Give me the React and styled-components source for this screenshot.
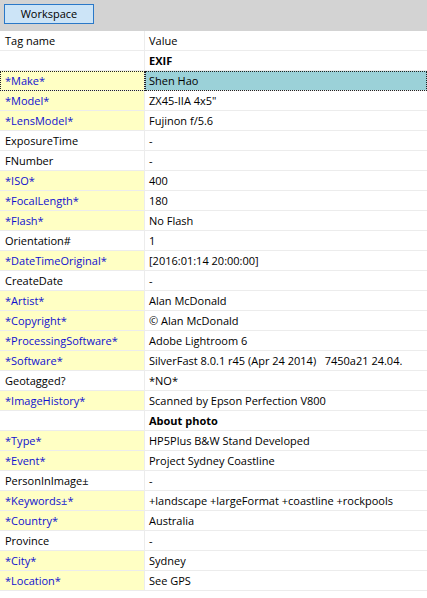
import React from "react";
import styled, { createGlobalStyle } from "styled-components";

const GlobalStyle = createGlobalStyle`
    html, body {
        margin: 0;
        padding: 0;
        background: #fff;
    }
    body {
        font-family: "Open Sans", "Noto Sans", "DejaVu Sans", sans-serif;
        font-size: 11px;
        color: #000;
    }
`;

const Window = styled.div`
    width: 427px;
    height: 598px;
    overflow: hidden;
    background: #fff;
`;

const Toolbar = styled.div`
    display: flex;
    align-items: flex-start;
    height: 31px;
    padding: 4px 0 0 4px;
    box-sizing: border-box;
    background: #d3d3d3;
`;

const ToolButton = styled.button`
    width: 90px;
    height: 20px;
    padding: 0;
    border: 1px solid #2a78c8;
    background: #cce4f7;
    font-family: inherit;
    font-size: 11px;
    color: #000;
    line-height: 16px;
`;

const Grid = styled.div`
    display: grid;
    grid-template-columns: 145px 1fr;
`;

const Cell = styled.div`
    height: 20px;
    box-sizing: border-box;
    border-bottom: 1px solid #ececec;
    padding-left: 5px;
    line-height: 20px;
    white-space: pre;
    overflow: hidden;
    background: ${({ $bg }) => $bg || "#fff"};
    color: ${({ $blue }) => ($blue ? "#1010d0" : "#000")};
    font-weight: ${({ $bold }) => ($bold ? 700 : 400)};
    outline: ${({ $focus }) => ($focus ? "1px dotted #222" : "none")};
    outline-offset: -1px;
`;

const NameCell = styled(Cell)`
    border-right: 1px solid #ececec;
`;

const ValueCell = styled(Cell)`
    padding-left: 4px;
`;

const rows = [
    ["EXIF", "", "section"],
    ["*Make*", "Shen Hao", "selected"],
    ["*Model*", "ZX45-IIA 4x5\""],
    ["*LensModel*", "Fujinon f/5.6"],
    ["ExposureTime", "-"],
    ["FNumber", "-"],
    ["*ISO*", "400"],
    ["*FocalLength*", "180"],
    ["*Flash*", "No Flash"],
    ["Orientation#", "1"],
    ["*DateTimeOriginal*", "[2016:01:14 20:00:00]"],
    ["CreateDate", "-"],
    ["*Artist*", "Alan McDonald"],
    ["*Copyright*", "© Alan McDonald"],
    ["*ProcessingSoftware*", "Adobe Lightroom 6"],
    ["*Software*", "SilverFast 8.0.1 r45 (Apr 24 2014)   7450a21 24.04."],
    ["Geotagged?", "*NO*"],
    ["*ImageHistory*", "Scanned by Epson Perfection V800"],
    ["About photo", "", "section"],
    ["*Type*", "HP5Plus B&W Stand Developed"],
    ["*Event*", "Project Sydney Coastline"],
    ["PersonInImage±", "-"],
    ["*Keywords±*", "+landscape +largeFormat +coastline +rockpools"],
    ["*Country*", "Australia"],
    ["Province", "-"],
    ["*City*", "Sydney"],
    ["*Location*", "See GPS"],
];

const App = () => {
    return (
        <Window>
            <GlobalStyle />
            <Toolbar>
                <ToolButton>Workspace</ToolButton>
            </Toolbar>
            <Grid>
                <NameCell>Tag name</NameCell>
                <ValueCell>Value</ValueCell>
                {rows.map(([name, value, kind]) => {
                    if (kind === "section") {
                        return (
                            <React.Fragment key={name}>
                                <NameCell />
                                <ValueCell $bold>{name}</ValueCell>
                            </React.Fragment>
                        );
                    }
                    const starred = name.startsWith("*");
                    const selected = kind === "selected";
                    return (
                        <React.Fragment key={name}>
                            <NameCell
                                $blue={starred}
                                $bg={starred ? "#ffffc4" : "#fff"}
                                $focus={selected}>
                                {name}
                            </NameCell>
                            <ValueCell
                                $bg={selected ? "#9bd1d8" : "#fff"}
                                $focus={selected}>
                                {value}
                            </ValueCell>
                        </React.Fragment>
                    );
                })}
            </Grid>
        </Window>
    );
};

export default App;
